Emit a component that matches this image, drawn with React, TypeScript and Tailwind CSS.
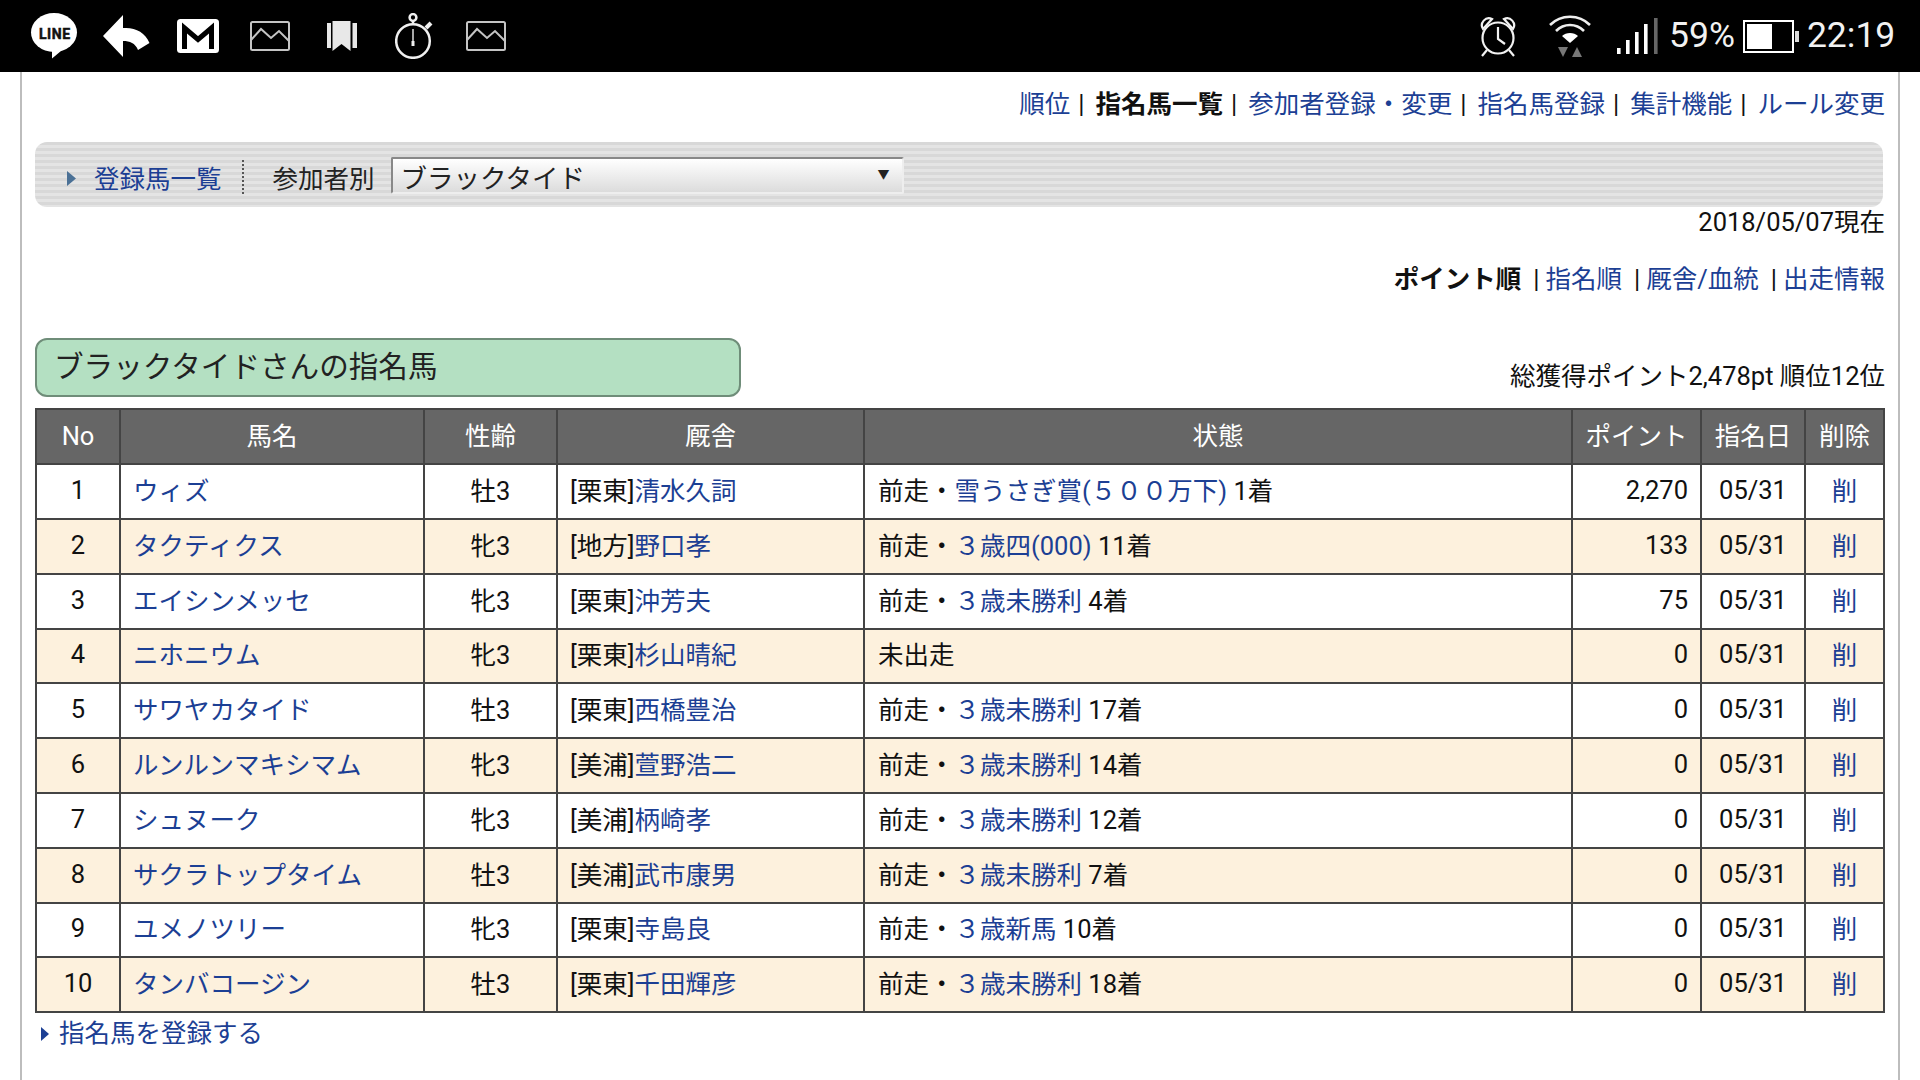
import React from "react";

const rows = [
  { no: "1", name: "ウィズ", sex: "牡3", reg: "栗東", tr: "清水久詞", race: "雪うさぎ賞(５００万下)", fin: "1着", pt: "2,270" },
  { no: "2", name: "タクティクス", sex: "牝3", reg: "地方", tr: "野口孝", race: "３歳四(000)", fin: "11着", pt: "133" },
  { no: "3", name: "エイシンメッセ", sex: "牝3", reg: "栗東", tr: "沖芳夫", race: "３歳未勝利", fin: "4着", pt: "75" },
  { no: "4", name: "ニホニウム", sex: "牝3", reg: "栗東", tr: "杉山晴紀", race: "", fin: "", pt: "0" },
  { no: "5", name: "サワヤカタイド", sex: "牡3", reg: "栗東", tr: "西橋豊治", race: "３歳未勝利", fin: "17着", pt: "0" },
  { no: "6", name: "ルンルンマキシマム", sex: "牝3", reg: "美浦", tr: "萱野浩二", race: "３歳未勝利", fin: "14着", pt: "0" },
  { no: "7", name: "シュヌーク", sex: "牝3", reg: "美浦", tr: "柄崎孝", race: "３歳未勝利", fin: "12着", pt: "0" },
  { no: "8", name: "サクラトップタイム", sex: "牡3", reg: "美浦", tr: "武市康男", race: "３歳未勝利", fin: "7着", pt: "0" },
  { no: "9", name: "ユメノツリー", sex: "牝3", reg: "栗東", tr: "寺島良", race: "３歳新馬", fin: "10着", pt: "0" },
  { no: "10", name: "タンバコージン", sex: "牡3", reg: "栗東", tr: "千田輝彦", race: "３歳未勝利", fin: "18着", pt: "0" },
];

const Link = ({ children }: { children: React.ReactNode }) => <a className="text-[#1c3f94]">{children}</a>;

const ImageIcon = ({ className }: { className: string }) => (
  <svg viewBox="0 0 40 30" width="40" height="30" className={className} fill="none" stroke="#c4c4c4" strokeWidth="2">
    <rect x="1" y="1" width="38" height="28" rx="1.5" />
    <path d="M1 19 L11 8 L21 17 L29 10 L39 20" />
  </svg>
);

const Sep = ({ cls }: { cls: string }) => <span className={cls}>|</span>;

export default function App() {
  const th = "border-2 border-[#444] font-normal text-white text-center";
  const td = "border-2 border-[#444] p-0";
  const navSep = "ml-[8px] mr-[11px]";
  return (
    <div className="w-[1920px] h-[1080px] overflow-hidden bg-white text-[25.5px] leading-none text-[#111] font-['Roboto','Noto_Sans_CJK_JP',sans-serif]">
      {/* status bar */}
      <div className="h-[72px] bg-black flex items-center text-white">
        <svg viewBox="0 0 48 46" width="48" height="46" className="ml-[30px]">
          <ellipse cx="24" cy="19.5" rx="23" ry="19.5" fill="#fff" />
          <path d="M19 37 L22 37 L22 45.5 L37 33Z" fill="#fff" />
          <text x="24.5" y="25.5" textAnchor="middle" fontSize="14" fontWeight="700" fill="#111" stroke="#111" strokeWidth="0.5" fontFamily="Roboto, sans-serif" textLength="31">LINE</text>
        </svg>
        <svg viewBox="0 0 47 42" width="47" height="42" className="ml-[25px]">
          <path d="M0 21 L20 0 V13 C32 12 42 17 46.5 28 L35 35 C32 28 27 26 20 26 V42Z" fill="#fff" />
        </svg>
        <svg viewBox="0 0 42 34" width="42" height="34" className="ml-[27px]">
          <rect x="0" y="0" width="42" height="34" rx="3.5" fill="#fff" />
          <path d="M7.5 30 V9 L21 20.5 L34.5 9 V30" fill="none" stroke="#000" strokeWidth="5" strokeLinejoin="miter" />
        </svg>
        <ImageIcon className="ml-[31px]" />
        <svg viewBox="0 0 31 30" width="31" height="30" className="ml-[37px]" fill="#e8e8e8">
          <rect x="0" y="2" width="4" height="25" />
          <path d="M5.5 0 H23.5 V30 L14.5 23 L5.5 30Z" />
          <rect x="25.5" y="2" width="4.5" height="25" />
        </svg>
        <svg viewBox="0 0 38 46" width="38" height="46" className="ml-[37px]" fill="none" stroke="#f0f0f0" strokeWidth="2.5">
          <circle cx="18" cy="28" r="16.8" />
          <circle cx="18" cy="4.5" r="3.4" />
          <path d="M18 8 V11" />
          <path d="M31 15 L36 10" strokeWidth="4" />
          <path d="M18 16 V30" strokeWidth="1.4" />
          <path d="M18 28 V33" strokeWidth="3" />
        </svg>
        <ImageIcon className="ml-[33px]" />

        <svg viewBox="0 0 38 42" width="38" height="42" className="ml-[973px]" fill="none" stroke="#f2f2f2" strokeWidth="2.2">
          <circle cx="19" cy="23" r="15.5" />
          <path d="M19 12 V24 L26 29" />
          <path d="M4 14 A7 7 0 0 1 13 4 Z" />
          <path d="M34 14 A7 7 0 0 0 25 4 Z" />
          <path d="M8 35 L3 41 M30 35 L35 41" />
        </svg>
        <svg viewBox="0 0 42 43" width="42" height="43" className="ml-[32px]">
          <g fill="none" stroke="#eee" strokeWidth="2.6">
            <path d="M1 10 C12 -1 30 -1 41 10" />
            <path d="M7 16 C15 8 27 8 35 16" />
          </g>
          <path d="M13 21 C17 17 25 17 29 21 L21 28Z" fill="#fff" />
          <path d="M9 32 H19 L14 42Z" fill="#777" />
          <path d="M23 42 H33 L28 32Z" fill="#777" />
        </svg>
        <svg viewBox="0 0 41 36" width="41" height="36" className="ml-[26px]">
          <rect x="0" y="30" width="3.6" height="6" fill="#fff" />
          <rect x="9" y="22" width="3.6" height="14" fill="#fff" />
          <rect x="18" y="14" width="3.6" height="22" fill="#fff" />
          <rect x="27" y="6" width="3.6" height="30" fill="#fff" />
          <rect x="37" y="0" width="3.6" height="36" fill="#666" />
        </svg>
        <span className="ml-[11px] text-[35.5px] font-['Roboto',sans-serif] text-[#f2f2f2]">59%</span>
        <svg viewBox="0 0 56 33" width="56" height="33" className="ml-[8px]">
          <rect x="1" y="1" width="49" height="31" fill="none" stroke="#fff" strokeWidth="2" />
          <rect x="4" y="4" width="25" height="25" fill="#fff" />
          <rect x="52" y="11" width="4" height="11" fill="#ddd" />
        </svg>
        <span className="ml-[8px] text-[35.5px] font-['Roboto',sans-serif] text-[#f2f2f2]">22:19</span>
      </div>

      {/* page */}
      <div className="ml-[20px] w-[1880px] h-[1008px] border-x-2 border-[#bdbdbd] pl-[13px] pr-[15px]">
        <div className="flex justify-end items-center h-[70px] pb-[5px] -mr-[2px]">
          <Link>順位</Link><Sep cls={navSep} />
          <b className="font-bold">指名馬一覧</b><Sep cls={navSep} />
          <Link>参加者登録・変更</Link><Sep cls={navSep} />
          <Link>指名馬登録</Link><Sep cls={navSep} />
          <Link>集計機能</Link><Sep cls={navSep} />
          <Link>ルール変更</Link>
        </div>

        <div className="h-[65px] rounded-[12px] flex items-center bg-[repeating-linear-gradient(180deg,#d8d8d8_0px,#d8d8d8_3px,#e4e4e4_3px,#e4e4e4_6px)]">
          <svg viewBox="0 0 9 15" width="9" height="15" className="ml-[32px] mt-[8px]"><path d="M0 0 L9 7.5 L0 15Z" fill="#4b7196" /></svg>
          <span className="ml-[18px] pt-[10px]"><Link>登録馬一覧</Link></span>
          <span className="ml-[20px] h-[34px] mt-[4px] border-l-2 border-dotted border-[#555]" />
          <span className="ml-[29px] pt-[10px] text-[#222]">参加者別</span>
          <div className="ml-[16px] mt-[2px] w-[513px] h-[37px] flex items-center justify-between border-2 border-t-[#888] border-l-[#888] border-r-[#eee] border-b-[#eee] rounded-[2px] bg-gradient-to-b from-white to-[#dcdcdc] pl-[8px] pr-[12px]">
            <span className="text-[26.5px] pt-[8px] text-[#222]">ブラックタイド</span>
            <span className="text-[12px] text-[#222] -mt-[2px]">▼</span>
          </div>
        </div>

        <div className="mt-[1px] h-[30px] flex items-center justify-end -mr-[2px]">2018/05/07現在</div>

        <div className="mt-[27px] h-[30px] flex items-center justify-end -mr-[2px]">
          <b className="font-bold">ポイント順</b><Sep cls="ml-[12px] mr-[6px]" />
          <Link>指名順</Link><Sep cls="ml-[12px] mr-[6px]" />
          <Link>厩舎/血統</Link><Sep cls="ml-[12px] mr-[6px]" />
          <Link>出走情報</Link>
        </div>

        <div className="mt-[43px] flex justify-between items-end h-[59px] -mr-[2px]">
          <div className="w-[706px] h-[59px] flex items-center pl-[17px] rounded-[12px] border-2 border-[#6f8d79] bg-[#b4e0c2] text-[29.6px] text-[#222]">
            ブラックタイドさんの指名馬
          </div>
          <div className="pb-[8px]">総獲得ポイント2,478pt 順位12位</div>
        </div>

        <table className="mt-[11px] w-[1848px] table-fixed border-collapse">
          <colgroup>
            <col className="w-[84px]" />
            <col className="w-[304px]" />
            <col className="w-[133px]" />
            <col className="w-[307px]" />
            <col className="w-[708px]" />
            <col className="w-[129px]" />
            <col className="w-[104px]" />
            <col className="w-[79px]" />
          </colgroup>
          <thead>
            <tr className="bg-[#666] h-[55px]">
              {["No", "馬名", "性齢", "厩舎", "状態", "ポイント", "指名日", "削除"].map((h) => (
                <th key={h} className={th}>{h}</th>
              ))}
            </tr>
          </thead>
          <tbody>
            {rows.map((r, i) => (
              <tr key={r.no} className={`${i % 2 ? "bg-[#fdf1dd]" : "bg-white"} ${i % 5 === 3 ? "h-[54px]" : "h-[55px]"}`}>
                <td className={`${td} text-center pb-[2px]`}>{r.no}</td>
                <td className={`${td} pl-[12px]`}><Link>{r.name}</Link></td>
                <td className={`${td} text-center`}>{r.sex}</td>
                <td className={`${td} pl-[12px]`}>[{r.reg}]<Link>{r.tr}</Link></td>
                <td className={`${td} pl-[13px]`}>
                  {r.race ? (
                    <>前走・<Link>{r.race}</Link> {r.fin}</>
                  ) : "未出走"}
                </td>
                <td className={`${td} text-right pr-[12px] pb-[2px]`}>{r.pt}</td>
                <td className={`${td} text-center pb-[2px]`}>05/31</td>
                <td className={`${td} text-center`}><Link>削</Link></td>
              </tr>
            ))}
          </tbody>
        </table>

        <div className="mt-[8px] flex items-center h-[26px]">
          <svg viewBox="0 0 8 14" width="8" height="14" className="ml-[6px]"><path d="M0 0 L8 7 L0 14Z" fill="#1c3f94" /></svg>
          <span className="ml-[10px]"><Link>指名馬を登録する</Link></span>
        </div>
      </div>
    </div>
  );
}
